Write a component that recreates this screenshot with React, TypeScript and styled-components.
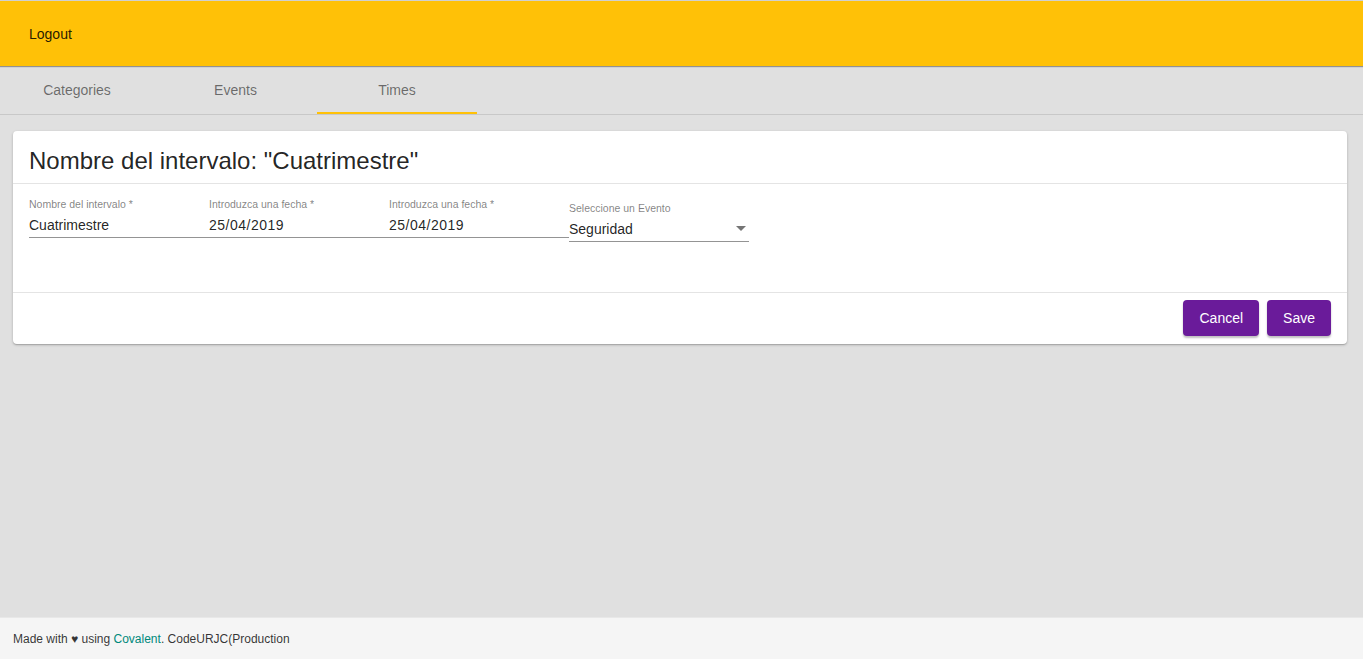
import React from "react";
import styled, { createGlobalStyle } from "styled-components";

const GlobalStyle = createGlobalStyle`
  html, body {
    margin: 0;
    padding: 0;
    height: 100%;
  }
  body {
    font-family: "Liberation Sans", Arial, sans-serif;
    background: #e0e0e0;
    color: rgba(0, 0, 0, 0.87);
  }
  #root {
    min-height: 100vh;
    display: flex;
    flex-direction: column;
  }
`;

const Toolbar = styled.div`
  height: 65px;
  border-top: 1px solid #d0d0d0;
  background: #ffc107;
  box-shadow: 0 1px 1px rgba(0, 0, 0, 0.35);
  display: flex;
  align-items: center;
  padding: 0 29px;
  font-size: 14px;
  color: rgba(0, 0, 0, 0.87);
  position: relative;
  z-index: 1;
`;

const TabBar = styled.div`
  display: flex;
  height: 47px;
  border-bottom: 1px solid #c8c8c8;
  margin-top: 1px;
`;

const Tab = styled.div<{ $active?: boolean; $width?: number }>`
  width: ${(p) => p.$width ?? 159}px;
  display: flex;
  align-items: center;
  justify-content: center;
  font-size: 14px;
  color: rgba(0, 0, 0, 0.54);
  box-sizing: border-box;
  border-bottom: 2px solid ${(p) => (p.$active ? "#ffc107" : "transparent")};
  padding-top: 1px;
`;

const Main = styled.div`
  flex: 1;
  padding: 16px 16px 0 13px;
`;

const Card = styled.div`
  background: #fff;
  border-radius: 4px;
  box-shadow: 0 1px 3px rgba(0, 0, 0, 0.2), 0 1px 1px rgba(0, 0, 0, 0.14);
`;

const CardTitle = styled.div`
  font-size: 24px;
  padding: 16px 16px 0;
  height: 36px;
  border-bottom: 1px solid #e4e4e4;
`;

const FormRow = styled.div`
  display: flex;
  padding: 14px 16px 0;
  height: 109px;
  box-sizing: border-box;
  border-bottom: 1px solid #e4e4e4;
`;

const Field = styled.div<{ $offset?: number }>`
  width: 180px;
  display: flex;
  flex-direction: column;
  margin-top: ${(p) => p.$offset ?? 0}px;
`;

const Label = styled.div`
  font-size: 10.5px;
  color: rgba(0, 0, 0, 0.5);
  height: 14px;
`;

const Value = styled.div<{ $date?: boolean }>`
  font-size: 14px;
  height: 26px;
  box-sizing: border-box;
  border-bottom: 1px solid rgba(0, 0, 0, 0.42);
  display: flex;
  align-items: center;
  justify-content: space-between;
  letter-spacing: ${(p) => (p.$date ? "0.5px" : "normal")};
`;

const Arrow = styled.span`
  width: 0;
  height: 0;
  border-left: 5px solid transparent;
  border-right: 5px solid transparent;
  border-top: 5px solid rgba(0, 0, 0, 0.54);
  margin-right: 3px;
`;

const Actions = styled.div`
  display: flex;
  justify-content: flex-end;
  gap: 8px;
  padding: 7px 16px 8px;
`;

const Button = styled.button`
  height: 36px;
  padding: 0 16px;
  border: none;
  border-radius: 4px;
  background: #6a1b9a;
  color: #fff;
  font-family: "Liberation Sans", Arial, sans-serif;
  font-size: 14px;
  box-shadow: 0 2px 2px rgba(0, 0, 0, 0.25);
`;

const Footer = styled.div`
  height: 41px;
  background: #f5f5f5;
  display: flex;
  align-items: center;
  padding: 0 13px;
  font-size: 12px;
  color: rgba(0, 0, 0, 0.8);
  border-top: 1px solid #e8e8e8;
`;

const Link = styled.span`
  color: #00897b;
`;

export default function App() {
  return (
    <>
      <GlobalStyle />
      <Toolbar>Logout</Toolbar>
      <TabBar>
        <Tab $width={154}>Categories</Tab>
        <Tab $width={163}>Events</Tab>
        <Tab $active $width={160}>Times</Tab>
      </TabBar>
      <Main>
        <Card>
          <CardTitle>Nombre del intervalo: "Cuatrimestre"</CardTitle>
          <FormRow>
            <Field>
              <Label>Nombre del intervalo *</Label>
              <Value>Cuatrimestre</Value>
            </Field>
            <Field>
              <Label>Introduzca una fecha *</Label>
              <Value $date>25/04/2019</Value>
            </Field>
            <Field>
              <Label>Introduzca una fecha *</Label>
              <Value $date>25/04/2019</Value>
            </Field>
            <Field $offset={4}>
              <Label>Seleccione un Evento</Label>
              <Value>
                Seguridad
                <Arrow />
              </Value>
            </Field>
          </FormRow>
          <Actions>
            <Button>Cancel</Button>
            <Button>Save</Button>
          </Actions>
        </Card>
      </Main>
      <Footer>
        Made with&nbsp;<span>♥</span>&nbsp;using&nbsp;<Link>Covalent</Link>. CodeURJC(Production
      </Footer>
    </>
  );
}
